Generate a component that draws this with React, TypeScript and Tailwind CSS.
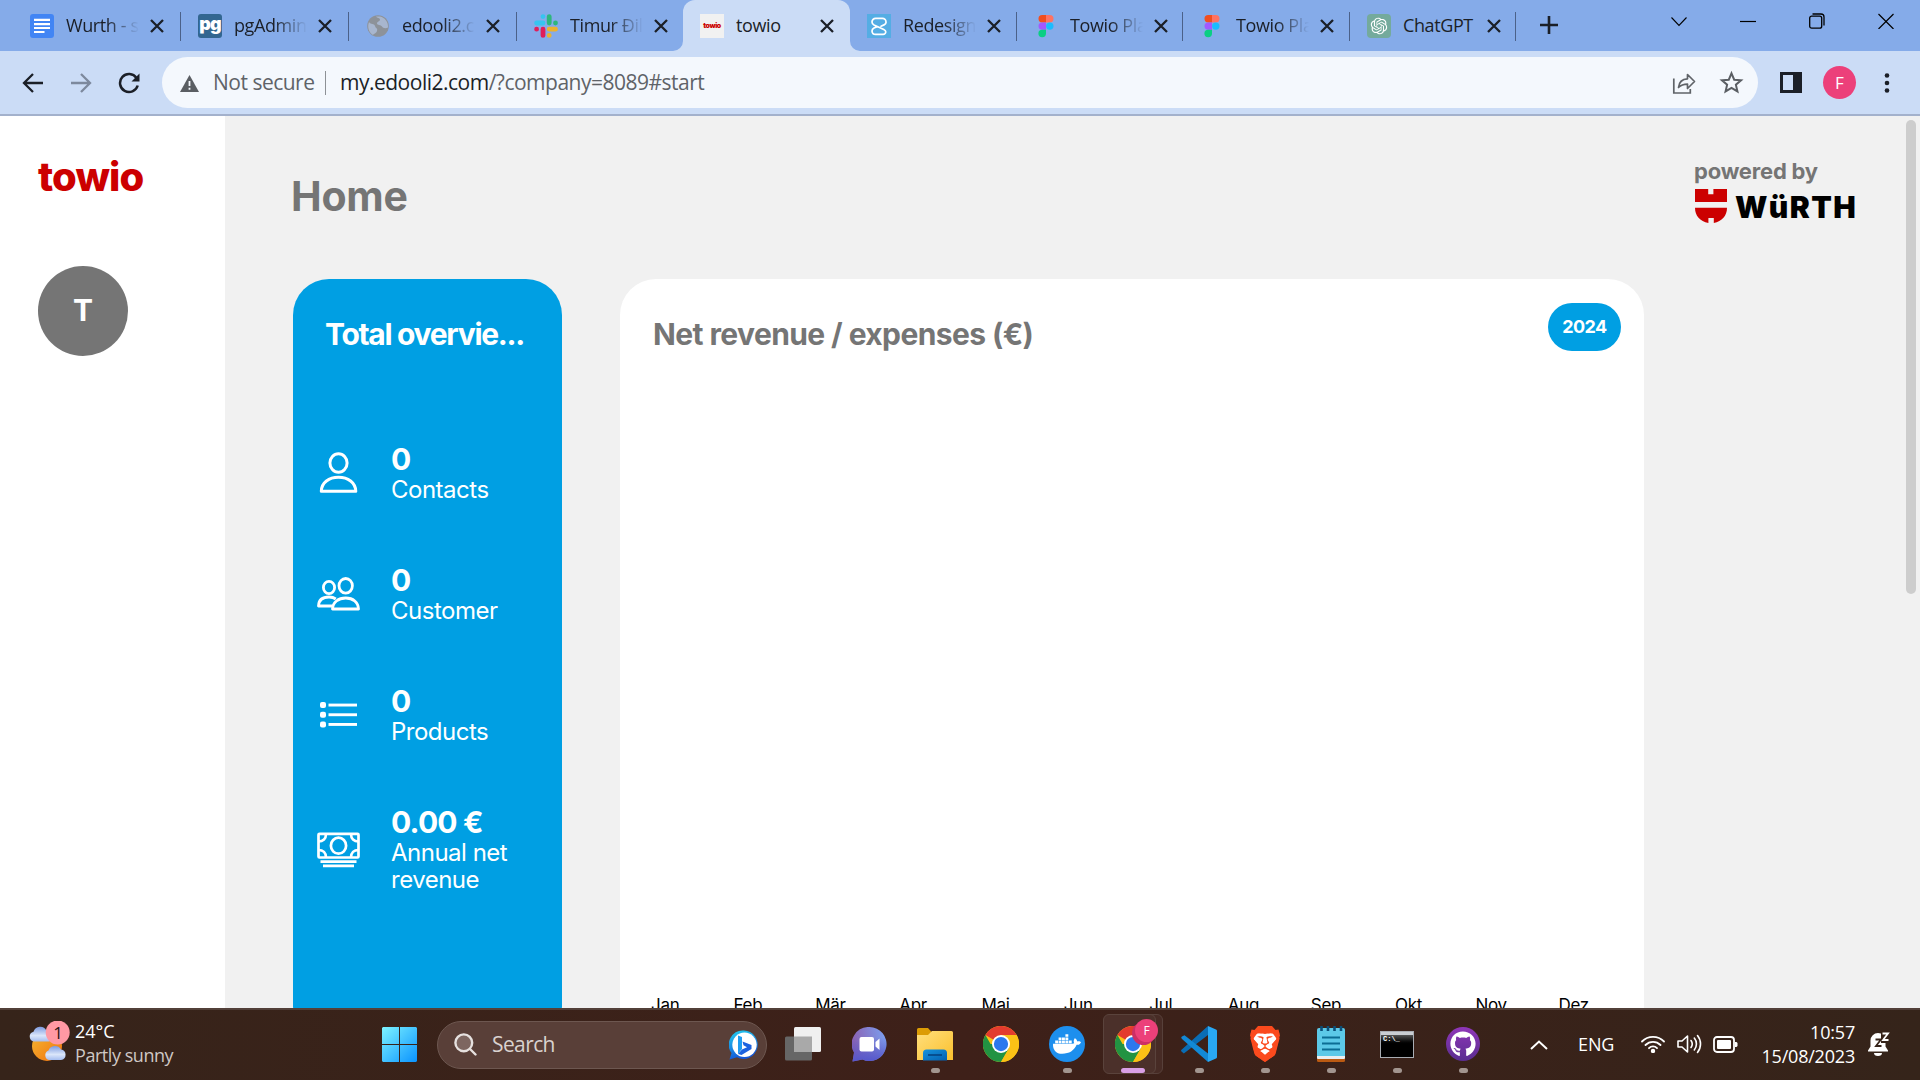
import type { ReactNode } from "react";
import { FaDocker, FaGithub } from "react-icons/fa";
import { FaBrave } from "react-icons/fa6";
import { RiOpenaiFill } from "react-icons/ri";

/* ---------- favicons ---------- */

const DocsIcon = () => (
  <svg viewBox="0 0 24 24" className="size-6">
    <rect width="24" height="24" rx="3" fill="#4285f4" />
    <path d="M4 5.800h16M4 10.200h16M4 14h16M4 18h10.500" stroke="#fff" strokeWidth="2.200" />
  </svg>
);

const PgIcon = () => (
  <span className="flex size-6 items-center justify-center rounded-[3px] bg-[#326690] pb-[3px] font-['Inter'] text-[18px] leading-none font-black tracking-[-1px] text-white">
    pg
  </span>
);

const GlobeIcon = () => (
  <svg viewBox="0 0 24 24" className="size-6">
    <circle cx="12" cy="12" r="10.800" fill="#8d9299" />
    <path d="M3 8c2 3 5 1 6 4s3 2 2 5-3 2-4 4C3 19 1 13 3 8zM10 2.500c1 2 4 1 4 3s-3 2-3 4 4 1 5 3 4 2 6 1c.5-5-3-10-8-11z" fill="#a8b6ce" />
  </svg>
);

const SlackIcon = () => (
  <svg viewBox="0 0 24 24" className="size-6" strokeWidth="4.800" strokeLinecap="round">
    <path d="M9 2.600h.01M2.600 9h6.400" stroke="#36c5f0" />
    <path d="M15.200 2.600v6.400M21.500 9h.01" stroke="#2eb67d" />
    <path d="M15.200 15.200h6.300M15.200 21.400h.01" stroke="#ecb22e" />
    <path d="M9 15.200v6.200M2.600 15.200h.01" stroke="#e01e5a" />
  </svg>
);

const TowioFavicon = () => (
  <span className="flex size-6 items-center justify-center bg-[#f1f1f1] pb-px font-['Inter'] text-[7px] leading-none font-black tracking-[-0.4px] text-[#cc0000]">
    towio
  </span>
);

const RedesignIcon = () => (
  <svg viewBox="0 0 24 24" className="size-6">
    <rect width="24" height="24" fill="#54ade4" />
    <path
      d="M19 8.500V8a3.600 3.600 0 00-3.600-3.600H8.600A3.600 3.600 0 005 8c0 1.500.8 2.400 2 3l9.800 4.600c1.200.6 2 1.200 2 2.400a2.800 2.800 0 01-2.800 2.400H8.600A3.600 3.600 0 015 17c0-1.500.8-2.400 2-3l3.200-1.400M19 8.500c0 1-.8 1.800-2 2.400l-3 1.300"
      fill="none"
      stroke="#fff"
      strokeWidth="1.700"
      strokeLinecap="round"
    />
  </svg>
);

const FigmaIcon = () => (
  <svg viewBox="0 0 16 24" className="h-6 w-4">
    <path d="M8 1v7.400H4.200a3.700 3.700 0 010-7.400z" fill="#f24e1e" />
    <path d="M8 1h3.800a3.700 3.700 0 010 7.400H8z" fill="#ff7262" />
    <path d="M8 8.400v7.400H4.200a3.700 3.700 0 010-7.400z" fill="#a259ff" />
    <circle cx="11.800" cy="12.100" r="3.700" fill="#1abcfe" />
    <path d="M8 15.800v3.700a3.800 3.700 0 11-3.800-3.700z" fill="#0acf83" />
  </svg>
);

const ChatGptIcon = () => (
  <span className="flex size-6 items-center justify-center rounded-[4px] bg-[#74aa9c] text-[20px] text-white">
    <RiOpenaiFill />
  </span>
);

/* ---------- browser chrome ---------- */

type TabInfo = { title: string; icon: ReactNode; width: string; active?: boolean; fade?: boolean; sep?: boolean };

const tabs: TabInfo[] = [
  { title: "Wurth - s", icon: <DocsIcon />, width: "w-[168px]", fade: true, sep: true },
  { title: "pgAdmin", icon: <PgIcon />, width: "w-[168px]", fade: true, sep: true },
  { title: "edooli2.c", icon: <GlobeIcon />, width: "w-[168px]", fade: true, sep: true },
  { title: "Timur Đil", icon: <SlackIcon />, width: "w-[166px]", fade: true },
  { title: "towio", icon: <TowioFavicon />, width: "w-[167px]", active: true },
  { title: "Redesign", icon: <RedesignIcon />, width: "w-[167px]", fade: true, sep: true },
  { title: "Towio Pla", icon: <FigmaIcon />, width: "w-[166px]", fade: true, sep: true },
  { title: "Towio Pla", icon: <FigmaIcon />, width: "w-[167px]", fade: true, sep: true },
  { title: "ChatGPT", icon: <ChatGptIcon />, width: "w-[166px]", sep: true },
];

function Tab({ title, icon, width, active, fade, sep }: TabInfo) {
  return (
    <div className={`relative flex h-[51px] shrink-0 items-center pl-[17px] ${width} ${active ? "rounded-t-[12px] bg-[#cbdcf6]" : ""}`}>
      {active && (
        <>
          <svg className="absolute bottom-0 -left-[10px] size-[10px]" viewBox="0 0 10 10">
            <path d="M10 0v10H0A10 10 0 0010 0z" fill="#cbdcf6" />
          </svg>
          <svg className="absolute -right-[10px] bottom-0 size-[10px]" viewBox="0 0 10 10">
            <path d="M0 0v10h10A10 10 0 010 0z" fill="#cbdcf6" />
          </svg>
        </>
      )}
      <span className="flex w-6 shrink-0 justify-center">{icon}</span>
      <span
        className={`-mt-px ml-3 w-[73px] overflow-hidden text-[18px] leading-6 tracking-[-0.4px] whitespace-nowrap text-[#1b1f27] ${
          fade ? "[mask-image:linear-gradient(to_right,#000_55%,transparent_100%)]" : ""
        }`}
      >
        {title}
      </span>
      <svg viewBox="0 0 14 14" className="ml-[11px] size-[14px] shrink-0" stroke="#1b1f27" strokeWidth="2.300">
        <path d="M1 1l12 12M13 1L1 13" />
      </svg>
      {sep && <span className="absolute top-[12px] right-0 h-[29px] w-px bg-[#4b6189]" />}
    </div>
  );
}

function TabStrip() {
  return (
    <div className="flex h-[51px] bg-[#85abe9] pl-[13px]">
      {tabs.map((t, i) => (
        <Tab key={i} {...t} />
      ))}
      <svg viewBox="0 0 20 20" className="mt-[15px] ml-[23px] size-5" stroke="#1b1f27" strokeWidth="2.600">
        <path d="M1 10h18M10 1v18" />
      </svg>
      <div className="ml-auto flex gap-[53px] pt-[13px] pr-[26px]">
        <svg viewBox="0 0 16 16" className="size-4" fill="none" stroke="#000" strokeWidth="1.100">
          <path d="M.5 4.500L8 12.500l7.500-8" />
        </svg>
        <svg viewBox="0 0 16 16" className="size-4" stroke="#000" strokeWidth="1.200">
          <path d="M0 8.500h16" />
        </svg>
        <svg viewBox="0 0 16 16" className="size-4" fill="none" stroke="#000" strokeWidth="1.300">
          <rect x=".7" y="3.200" width="12" height="12" rx="2" />
          <path d="M3.500 1h8.500a3 3 0 013 3v8.500" />
        </svg>
        <svg viewBox="0 0 16 16" className="size-4" stroke="#000" strokeWidth="1.200">
          <path d="M.5 1l15 15M15.500 1l-15 15" />
        </svg>
      </div>
    </div>
  );
}

function Toolbar() {
  return (
    <div className="flex h-[65px] items-center border-b-2 border-[#a3b1cc] bg-[#cbdcf6] pl-[22px]">
      <svg viewBox="0 0 22 22" className="size-[22px]" fill="none" stroke="#1b1f27" strokeWidth="2.300">
        <path d="M21 11H2.500M11 2L2 11l9 9" />
      </svg>
      <svg viewBox="0 0 22 22" className="ml-[26px] size-[22px]" fill="none" stroke="#7d899d" strokeWidth="2.300">
        <path d="M1 11h18.500M11 2l9 9-9 9" />
      </svg>
      <svg viewBox="0 0 22 22" className="ml-[26px] size-[22px]" fill="none" stroke="#1b1f27" strokeWidth="2.500">
        <path d="M18.500 6A9 9 0 1019.700 13.500" />
        <path d="M21.500 1.500v8h-8z" fill="#1b1f27" stroke="none" />
      </svg>

      <div className="ml-[22px] flex h-[51px] w-[1596px] items-center rounded-full bg-[#f4f8fd] pr-[14px] pl-[18px] text-[21px] tracking-[-0.5px] text-[#5f6368]">
        <svg viewBox="0 0 19 17" className="mt-px h-[17px] w-[19px]">
          <path d="M9.500 0L19 17H0z" fill="#5a5e63" />
          <path d="M9.500 6v5M9.500 12.800v2" stroke="#f4f8fd" strokeWidth="1.800" />
        </svg>
        <span className="ml-[14px] w-[99px] whitespace-nowrap">Not secure</span>
        <span className="ml-[13px] h-6 w-px bg-[#8d9196]" />
        <span className="ml-[14px] whitespace-nowrap">
          <span className="text-[#1b1f27]">my.edooli2.com</span>/?company=8089#start
        </span>
        <svg viewBox="0 0 24 24" className="ml-auto size-6" fill="none" stroke="#5f6368" strokeWidth="1.700">
          <path d="M1.800 7.500V22h16.500v-4" />
          <path d="M6.500 16.500c.5-5.500 4-8.500 9-8.700V3.500l7 7-7 7v-4.300c-4 0-6.500.8-9 3.300z" strokeLinejoin="round" />
        </svg>
        <svg viewBox="0 0 24 24" className="ml-[23px] size-[25px]" fill="none" stroke="#5a5e63" strokeWidth="1.900">
          <path d="M12 3.200l2.600 6.100 6.600.5-5 4.300 1.500 6.500-5.700-3.500-5.700 3.500 1.500-6.500-5-4.300 6.600-.5z" />
        </svg>
      </div>

      <svg viewBox="0 0 22 21" className="ml-[22px] h-[21px] w-[22px]">
        <path d="M0 0h22v21H0zM3 3v15h10V3z" fill="#1b1f27" fillRule="evenodd" />
      </svg>
      <span className="ml-[21px] flex size-[33px] items-center justify-center rounded-full bg-[#ec407a] text-[17px] text-white">F</span>
      <svg viewBox="0 0 6 20" className="ml-[28px] h-5 w-[6px]" fill="#1b1f27">
        <circle cx="3" cy="2.500" r="2.300" />
        <circle cx="3" cy="10" r="2.300" />
        <circle cx="3" cy="17.500" r="2.300" />
      </svg>
    </div>
  );
}

/* ---------- page ---------- */

const PersonIcon = () => (
  <svg viewBox="0 0 43 42" className="h-[42px] w-[43px]" fill="none" stroke="#fff" strokeWidth="3">
    <ellipse cx="21.500" cy="11" rx="8.600" ry="9.300" />
    <path d="M4.300 39.300C4.500 30.500 12 25.300 21.500 25.300S38.500 30.500 38.800 39.300z" strokeLinejoin="round" />
  </svg>
);

const PeopleIcon = () => (
  <svg viewBox="0 0 43 34" className="h-[34px] w-[43px]" fill="none" stroke="#fff" strokeWidth="2.800" strokeLinejoin="round">
    <ellipse cx="12" cy="10.500" rx="5.600" ry="6.200" />
    <ellipse cx="28.700" cy="8.800" rx="6.700" ry="7.300" />
    <path d="M15.500 32c.3-6.700 5.800-11 13.200-11s12.500 4.300 12.800 11z" />
    <path d="M15.500 29H1.500c.2-5.700 4-9 10.500-9 2.800 0 5 .7 6.800 2" />
  </svg>
);

const ListIcon = () => (
  <svg viewBox="0 0 43 26" className="h-[26px] w-[43px]" fill="#fff">
    {[0, 9.7, 19.4].map((y) => (
      <g key={y}>
        <rect x="3" y={y} width="6" height="6" rx="2" />
        <rect x="11.500" y={y + 1.600} width="28.500" height="2.900" />
      </g>
    ))}
  </svg>
);

const MoneyIcon = () => (
  <svg viewBox="0 0 43 36" className="h-9 w-[43px]" fill="none" stroke="#fff" strokeWidth="2.700">
    <rect x="1.500" y="1.800" width="40" height="23.700" rx="1" />
    <ellipse cx="21.500" cy="13.700" rx="7.600" ry="8" />
    <path d="M9 2c0 4.500-3 7.500-7.500 7.500M34 2c0 4.500 3 7.500 7.500 7.500M9 25.500c0-4.500-3-7.500-7.500-7.500M34 25.500c0-4.500 3-7.500 7.500-7.500" />
    <path d="M3.500 29.700h36M6 33.900h31" />
  </svg>
);

const stats = [
  { value: "0", label: "Contacts", icon: <PersonIcon /> },
  { value: "0", label: "Customer", icon: <PeopleIcon /> },
  { value: "0", label: "Products", icon: <ListIcon /> },
  { value: "0.00 €", label: "Annual net revenue", icon: <MoneyIcon /> },
];

const months = ["Jan", "Feb", "Mär", "Apr", "Mai", "Jun", "Jul", "Aug", "Sep", "Okt", "Nov", "Dez"];

function Page() {
  return (
    <div className="relative flex h-[892px] overflow-hidden bg-[#f1f1f1] font-['Inter',sans-serif]">
      <aside className="h-full w-[225px] shrink-0 bg-white pt-[37px] pl-[38px]">
        <div className="text-[40px] leading-[48px] font-extrabold tracking-[-0.9px] text-[#cc0000]">towio</div>
        <div className="mt-[65px] flex size-[90px] items-center justify-center rounded-full bg-[#757575] pb-px text-[30px] font-bold text-white">T</div>
      </aside>

      <main className="flex flex-1 flex-col pl-[68px]">
        <header className="flex h-[163px] shrink-0 justify-between">
          <h1 className="-ml-[2px] pt-[56px] text-[41px] leading-[48px] font-bold tracking-[-0.2px] text-[#757575]">Home</h1>
          <div className="w-[225px] pt-[42px]">
            <div className="-ml-px text-[22px] leading-[27px] font-bold tracking-[-0.2px] text-[#757575]">powered by</div>
            <div className="mt-[4px] flex h-[34px] items-center">
              <svg viewBox="0 0 32 34" className="h-[34px] w-8" fill="#cc0000">
                <path d="M0 0h13.200v5.300h5.200V0H32v13H0z" />
                <path d="M0 18.700h32c0 8-5 13.500-13.200 15.300v-5h-5.400v5C5 32.200 0 26.700 0 18.700z" />
              </svg>
              <span className="mt-[2px] ml-[8px] text-[30px] leading-[34px] font-black tracking-[1.4px] text-black">WüRTH</span>
            </div>
          </div>
        </header>

        <div className="flex items-start gap-[58px]">
          <section className="h-[762px] w-[269px] rounded-[36px] bg-[#009fe3] pt-[37px] text-white">
            <h2 className="pl-8 text-[30px] leading-9 font-bold tracking-[-1.3px] whitespace-nowrap">Total overvie...</h2>
            <div className="mt-[91px] flex flex-col gap-[61px] pl-6">
              {stats.map((s) => (
                <div key={s.label} className="flex items-center">
                  {s.icon}
                  <div className="ml-[31px] w-[130px]">
                    <div className="text-[30px] leading-[33px] font-bold tracking-[-0.8px]">{s.value}</div>
                    <div className="text-[24px] leading-[27px] tracking-[-0.5px]">{s.label}</div>
                  </div>
                </div>
              ))}
            </div>
          </section>

          <section className="flex h-[900px] w-[1024px] flex-col rounded-[36px] bg-white">
            <div className="flex justify-between pt-6 pr-[23px] pl-[33px]">
              <h2 className="pt-[13px] text-[30px] leading-9 font-bold tracking-[-0.6px] text-[#757575]">Net revenue / expenses (€)</h2>
              <button className="h-12 w-[73px] rounded-full bg-[#009fe3] pb-px text-[18px] font-bold tracking-[-0.6px] text-white">2024</button>
            </div>
            <div className="mt-[643px] ml-[4px] grid w-[991px] grid-cols-12 text-center text-[17px] leading-5 tracking-[-0.3px] text-black">
              {months.map((m) => (
                <span key={m}>{m}</span>
              ))}
            </div>
          </section>
        </div>
      </main>
      <div className="absolute top-[4px] right-[4px] h-[474px] w-[10px] rounded-full bg-[#cdcdcd]" />
    </div>
  );
}

/* ---------- taskbar ---------- */

const WeatherIcon = () => (
  <svg viewBox="0 0 42 42" className="size-[42px]">
    <defs>
      <linearGradient id="sun" x1="0" x2="1" y1="0" y2="1">
        <stop offset="0" stopColor="#f5b932" />
        <stop offset="1" stopColor="#f0700f" />
      </linearGradient>
      <linearGradient id="cloud" x1="0" x2="0" y1="0" y2="1">
        <stop offset="0" stopColor="#7d9be0" />
        <stop offset=".6" stopColor="#dbe6fa" />
        <stop offset="1" stopColor="#a5bdf0" />
      </linearGradient>
    </defs>
    <circle cx="18" cy="25" r="15" fill="url(#sun)" />
    <path d="M5 20.500a5 5 0 01-.5-9.800 7 7 0 0113-1A5.500 5.500 0 0120 20.500z" fill="url(#cloud)" />
    <path d="M20 39a5 5 0 01-.5-9.500 7 7 0 0112.500-1A5.300 5.300 0 0132 39z" fill="url(#cloud)" />
    <circle cx="28.700" cy="11.500" r="12" fill="#ff99a4" />
  </svg>
);

const WindowsIcon = () => (
  <svg viewBox="0 0 35 35" className="-mt-px size-[35px]">
    <defs>
      <linearGradient id="win" x1="0" x2="1" y1="0" y2="1">
        <stop offset="0" stopColor="#7df3ff" />
        <stop offset="1" stopColor="#0a93ff" />
      </linearGradient>
    </defs>
    <path d="M1 0h16v17H0V1zM18 0h16l1 1v16H18zM0 18h17v17H1l-1-1zM18 18h17v16l-1 1H18z" fill="url(#win)" />
  </svg>
);

const BingIcon = () => (
  <svg viewBox="0 0 30 30" className="size-[30px]">
    <defs>
      <linearGradient id="bing" x1="0" x2=".3" y1="0" y2="1">
        <stop offset="0" stopColor="#22d0f0" />
        <stop offset="1" stopColor="#1457d8" />
      </linearGradient>
    </defs>
    <path d="M15 .5a14.200 14.200 0 11-7 26.800L.5 29.500l2-6.500A14.200 14.200 0 0115 .5z" fill="url(#bing)" />
    <circle cx="15.500" cy="14.800" r="12.200" fill="#fff" />
    <path d="M9 5.500l4 1.500v12l-4 5z" fill="#1f9cf0" />
    <path d="M9 24l4-4.500 5-2.300-3.500-2-1-3.700 9 3.500v4L12.500 25z" fill="#1c62e0" />
  </svg>
);

const TaskViewIcon = () => (
  <svg viewBox="0 0 36 34" className="h-[34px] w-9">
    <rect y="9.500" width="27" height="24" rx="1.500" fill="#666" />
    <rect x="9" width="27" height="25" rx="1.500" fill="#f0f0f0" />
    <path d="M9 9.500h18V25H9z" fill="#a9a9a9" />
  </svg>
);

const MeetIcon = () => (
  <svg viewBox="0 0 35 35" className="size-[35px]">
    <defs>
      <linearGradient id="meet" x1="0" x2="1" y1=".2" y2="0">
        <stop offset="0" stopColor="#8b62b3" />
        <stop offset="1" stopColor="#7aa2f2" />
      </linearGradient>
      <linearGradient id="meetShade" x1="0" x2="0" y1="0" y2="1">
        <stop offset=".3" stopColor="#5558c8" stopOpacity="0" />
        <stop offset="1" stopColor="#5457cd" />
      </linearGradient>
    </defs>
    <path d="M17.500 0a17 17 0 11-7 32.500L.5 34.500l1.500-9A17 17 0 0117.500 0z" fill="url(#meet)" />
    <path d="M17.500 0a17 17 0 11-7 32.500L.5 34.500l1.500-9A17 17 0 0117.500 0z" fill="url(#meetShade)" />
    <rect x="7.500" y="10" width="14.500" height="14.500" rx="2" fill="#fff" />
    <path d="M23.500 15l4-3.500v11.500l-4-3.500z" fill="#fff" />
  </svg>
);

const FolderIcon = () => (
  <svg viewBox="0 0 36 34" className="h-[34px] w-9">
    <defs>
      <linearGradient id="fold" x1="0" x2="1" y1="0" y2="1">
        <stop offset="0" stopColor="#ffdf7d" />
        <stop offset="1" stopColor="#fbc02d" />
      </linearGradient>
      <linearGradient id="dock" x1="0" x2="1" y1="0" y2="1">
        <stop offset="0" stopColor="#1593dd" />
        <stop offset="1" stopColor="#0560b0" />
      </linearGradient>
    </defs>
    <path d="M0 2.500A1.500 1.500 0 011.500 1H11l4 4.500L12 9H0z" fill="#dc9c05" />
    <path d="M0 8h11l4-4h19.500A1.500 1.500 0 0136 5.500V33H0z" fill="url(#fold)" />
    <path d="M6 33.500V26a3.500 3.500 0 013.500-3.500h17A3.500 3.500 0 0130 26v7.500z" fill="url(#dock)" />
    <path d="M11 28h14" stroke="#053f7c" strokeWidth="1.500" />
  </svg>
);

const ChromeIcon = () => (
  <svg viewBox="0 0 48 48" className="size-9">
    <circle cx="24" cy="24" r="24" fill="#fbc116" />
    <path d="M24 24L3.200 12A24 24 0 0144.800 12z" fill="#e33b2e" />
    <path d="M3.200 12A24 24 0 0024 48l10.400-18L24 24H10.100z" fill="#229342" />
    <path d="M24 12h20.800A24 24 0 0124 48l10.400-18z" fill="#fbc116" />
    <circle cx="24" cy="24" r="12" fill="#fff" />
    <circle cx="24" cy="24" r="9.500" fill="#2b78ee" />
  </svg>
);

const DockerIcon = () => (
  <span className="flex size-9 items-center justify-center rounded-full bg-[#1d8fee] text-[28px] text-white">
    <FaDocker />
  </span>
);

const VsCodeIcon = () => (
  <svg viewBox="0 0 36 36" className="size-9">
    <path d="M27 0L.8 23.500c-1 .8-1 1.500 0 2.300l2 1.700L27 9z" fill="#0a6db5" />
    <path d="M1 10.500C0 11.300 0 12 1 13l26 23v-8.500L3.500 9.200z" fill="#1289d6" />
    <path d="M27 0l8 3.500c.7.300 1 .8 1 1.500v26c0 .7-.3 1.200-1 1.500L27 36z" fill="#29a8f3" />
  </svg>
);

const BraveIcon = () => (
  <span className="relative flex h-9 w-[36px] items-center justify-center">
    <svg viewBox="0 0 30 36" className="absolute h-9 w-[30px]">
      <path d="M8 0h14l3.500 4 3-.5 1.500 6-1.200 3L25 29l-10 7L5 29 1.200 12.500 0 9.500l1.500-6 3 .5z" fill="#fb4a1d" />
      <path d="M5 8l5-1 5 1 5-1 5 1 2.500 4-4.500 6 .5 3-5 2.500 2.500 2-6 5-6-5 2.500-2-5-2.500.5-3L2.500 12z" fill="#fff" />
    </svg>
    <FaBrave className="relative h-[35px] w-[30px] text-[#fb4a1d]" />
  </span>
);

const NotepadIcon = () => (
  <svg viewBox="0 0 28 36" className="h-9 w-7">
    <rect y="31" width="28" height="5" rx="1.500" fill="#bb5a12" />
    <rect y="27" width="28" height="6" rx="1" fill="#e9eef0" />
    <path d="M0 4a2 2 0 012-2h24a2 2 0 012 2v26H0z" fill="#5cc9e8" />
    <path d="M4.500 0v5M11 0v5M17.500 0v5M24 0v5" stroke="#0b4f78" strokeWidth="2.600" />
    <path d="M5 11.500h18M5 17.500h18M5 23.500h18" stroke="#0b6d94" strokeWidth="1.800" />
  </svg>
);

const TerminalIcon = () => (
  <span className="flex h-[27px] w-[34px] flex-col border border-[#a9adb3] bg-black">
    <span className="h-[3px] bg-[#c9cdd2]" />
    <span className="flex-1 bg-linear-to-b from-[#555] to-black to-45% pl-[2px] font-['Liberation_Mono'] text-[7px] leading-[9px] font-bold text-white">C:\_</span>
  </span>
);

const GithubIcon = () => (
  <span className="flex size-[34px] items-center justify-center rounded-full bg-linear-to-b from-[#8f36b8] to-[#5a2d91] text-[26px] text-white">
    <FaGithub />
  </span>
);

const apps: { name: string; icon: ReactNode; running?: boolean; active?: boolean }[] = [
  { name: "task-view", icon: <TaskViewIcon /> },
  { name: "chat", icon: <MeetIcon /> },
  { name: "explorer", icon: <FolderIcon />, running: true },
  { name: "chrome", icon: <ChromeIcon /> },
  { name: "docker", icon: <DockerIcon />, running: true },
  { name: "chrome-profile", icon: <ChromeIcon />, active: true },
  { name: "vscode", icon: <VsCodeIcon />, running: true },
  { name: "brave", icon: <BraveIcon />, running: true },
  { name: "notepad", icon: <NotepadIcon />, running: true },
  { name: "terminal", icon: <TerminalIcon />, running: true },
  { name: "github", icon: <GithubIcon />, running: true },
];

function Taskbar() {
  return (
    <footer className="flex h-[72px] items-center border-t-2 border-[#524039] bg-linear-to-r from-[#36241a] via-[#3e2019] to-[#35241a] text-[18px] text-white">
      <div className="flex w-[382px] items-center pl-[29px]">
        <span className="relative -mt-[6px]">
          <WeatherIcon />
          <span className="absolute top-0 left-[17px] w-6 text-center text-[17px] leading-[23px] text-[#2a1512]">1</span>
        </span>
        <div className="-mt-[4px] ml-[4px] leading-6">
          <div>24°C</div>
          <div className="tracking-[-0.45px] text-[#cfc8c5]">Partly sunny</div>
        </div>
      </div>
      <WindowsIcon />
      <div className="ml-5 -mt-px flex h-12 w-[330px] items-center rounded-full border border-[#6d5750] bg-[#593f38] pr-[7px] pl-[16px]">
        <svg viewBox="0 0 23 23" className="size-[23px]" fill="none" stroke="#e6e1df" strokeWidth="2.400" strokeLinecap="round">
          <circle cx="9.800" cy="9.800" r="8.400" fill="#7d6660" />
          <path d="M16 16l5.500 5.500" />
        </svg>
        <span className="ml-[15px] flex-1 text-[21px] tracking-[-0.6px] text-[#d9d2cf]">Search</span>
        <BingIcon />
      </div>
      <div className="ml-[3px] flex h-full">
        {apps.map((a) => (
          <div key={a.name} className="relative flex h-full w-[66px] items-center justify-center pb-[2px]">
            {a.active && (
              <>
                <span className="absolute top-[4px] left-[12px] h-[60px] w-[51px] rounded-[6px] border border-[#57403a] bg-[#472b25]" />
                <span className="absolute top-[4px] left-[3px] h-[60px] w-[53px] rounded-[6px] border border-[#5a433c] bg-[#4b302a]" />
              </>
            )}
            <span className="relative">{a.icon}</span>
            {a.active && (
              <>
                <span className="absolute top-[12px] left-[32px] size-[23px] rounded-full bg-[#cc2f66]" />
                <span className="absolute top-[9px] left-[35px] flex size-[23px] items-center justify-center rounded-full bg-[#ec407a] text-[12px] text-white">F</span>
                <span className="absolute bottom-[7px] h-[5px] w-6 rounded-full bg-[#d9a0e6]" />
              </>
            )}
            {a.running && <span className="absolute bottom-[7px] h-[5px] w-[9px] rounded-full bg-[#a2958f]" />}
          </div>
        ))}
      </div>
      <svg viewBox="0 0 18 10" className="ml-[34px] h-[10px] w-[18px]" fill="none" stroke="#fff" strokeWidth="2">
        <path d="M1 9l8-7.500L17 9" />
      </svg>
      <span className="-mt-[2px] ml-[30px] w-[63px] text-[18px] tracking-[-0.1px]">ENG</span>
      <svg viewBox="0 0 24 18" className="-mt-[2px] h-[18px] w-6" fill="none" stroke="#fff" strokeWidth="1.800" strokeLinecap="round">
        <path d="M1 6.500a15.500 15.500 0 0122 0M4.500 10a10.500 10.500 0 0115 0M8 13.200a5.500 5.500 0 018 0" />
        <circle cx="12" cy="16" r="1.300" fill="#fff" />
      </svg>
      <svg viewBox="0 0 25 20" className="-mt-[2px] ml-[12px] h-5 w-[25px]" fill="none" stroke="#fff" strokeWidth="1.600" strokeLinejoin="round" strokeLinecap="round">
        <path d="M1 7h4l5.500-5v16L5 13H1z" />
        <path d="M14 6.500a6 6 0 010 7M17.300 4a9.500 9.500 0 010 12M20.500 1.500a13.500 13.500 0 010 17" />
      </svg>
      <svg viewBox="0 0 25 17" className="-mt-[2px] ml-[11px] h-[17px] w-[25px]">
        <rect x="1" y="1" width="20" height="15" rx="3" fill="none" stroke="#fff" strokeWidth="1.800" />
        <rect x="4" y="4" width="14" height="9" rx="1" fill="#fff" />
        <path d="M22 6h1.500l1 1v3l-1 1H22z" fill="#fff" />
      </svg>
      <div className="-mt-[3px] w-[117px] text-right leading-6 tracking-[-0.2px]">
        <div>10:57</div>
        <div>15/08/2023</div>
      </div>
      <svg viewBox="0 0 22 24" className="-mt-[2px] ml-[13px] h-6 w-[22px]">
        <path d="M10 1a7.500 7.500 0 017.500 7.500v6l2.500 4v1H0v-1l2.500-4v-6A7.500 7.500 0 0110 1zM6 21h8a4 3 0 01-8 0z" fill="#fff" />
        <path d="M13 0h8.500v11H13z" fill="#36241a" />
        <path d="M14.500 1.500h5.500l-5 6.500h5.500" fill="none" stroke="#fff" strokeWidth="1.800" />
        <path d="M7.500 7.500h5.500l-5 6.500h5.500" fill="none" stroke="#36241a" strokeWidth="1.800" />
      </svg>
    </footer>
  );
}

export default function App() {
  return (
    <div className="flex h-[1080px] w-[1920px] flex-col overflow-hidden font-['Open_Sans',sans-serif]">
      <TabStrip />
      <Toolbar />
      <Page />
      <Taskbar />
    </div>
  );
}
